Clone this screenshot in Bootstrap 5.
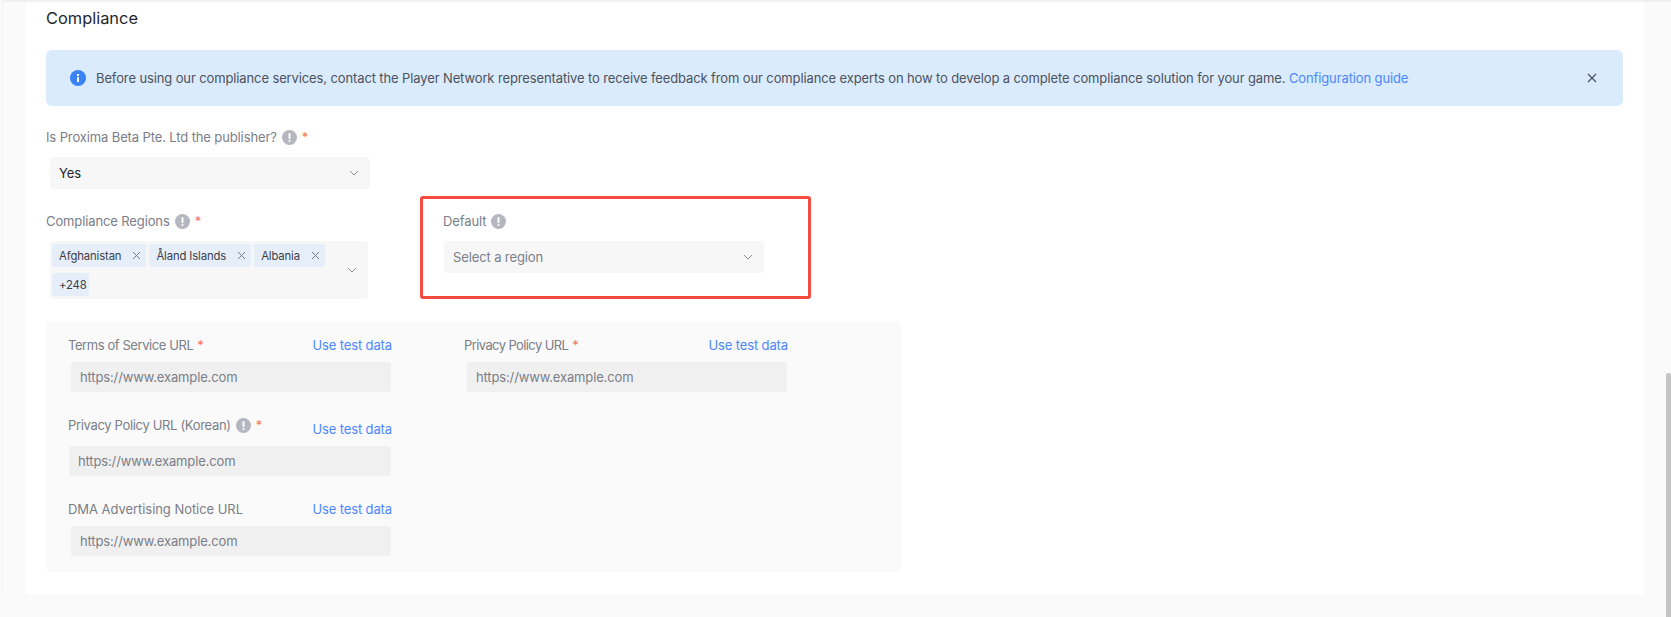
<!DOCTYPE html>
<html lang="en">
<head>
<meta charset="utf-8">
<title>Compliance</title>
<link href="https://cdn.jsdelivr.net/npm/bootstrap@5.3.0/dist/css/bootstrap.min.css" rel="stylesheet">
<style>
html,body{height:617px;overflow:hidden;}
body{background:#fafafa;font-family:Inter,"Noto Sans",sans-serif;font-size:13px;line-height:20px;color:#23262e;letter-spacing:-.12px;}
.shell{margin-left:2px;border-left:1px solid #f2f2f2;border-top:2px solid #f0f0f0;padding-left:22px;padding-right:27px;}
.sheet{background:#fff;height:593px;padding:4px 21px 0 21px;border-radius:0 0 4px 4px;}
.sheet-title{font-size:16.4px;line-height:24px;margin:0 0 20px;font-weight:400;color:#23262e;letter-spacing:0;}
.notice{background:#d9ebfd;border:0;border-radius:6px;height:56px;padding:0 26px 0 24px;margin:0 0 21px;color:#4e525c;font-size:13px;}
.notice-icon{margin-right:10px;flex:none;}
.notice-copy{padding-bottom:1px;}
.notice a,.test-link{color:#4c87ff;text-decoration:none;}
.field-label{color:#7b7e88;height:20px;}
.req{color:#f7765d;margin-left:5px;}
.hint{margin-left:5px;flex:none;}
.picker{background:#f7f7f7;border-radius:4px;color:#23262e;padding-left:9px;padding-right:11px;}
.picker-one{width:320px;height:32px;margin-top:10px;margin-left:4px;}
.picker-many{width:318px;height:58px;margin-top:10px;margin-left:4px;padding:3px 11px 3px 2px;}
.muted-text{color:#7b7e88;}
.tag-wrap{width:285px;column-gap:3px;row-gap:6px;}
.chip{background:#e5eef9;border-radius:2px;height:23px;padding:0 5px 0 7px;font-size:11.3px;color:#3d4048;}
.chip svg{margin-left:11px;}
.chip.count{padding-right:2px;}
.left-col{width:374px;padding-top:15px;flex:none;}
.callout{width:391px;height:103px;border:3px solid #f44b3f;border-radius:3px;padding:12px 0 0 20px;}
.callout .picker-one{margin-left:1px;}
.split{height:103px;margin-top:7px;margin-bottom:22px;}
.panel{width:855px;height:251px;background:#fafafa;border-radius:4px;padding:14px 22px 0;column-gap:72px;}
.field{width:324px;margin-bottom:23px;}
.field-head{height:20px;margin-bottom:7px;}
.field-head.tall{height:24px;}
.field-head.tall .test-link{margin-top:4px;}
.tight-a{letter-spacing:-.42px;}
.tight-b{letter-spacing:-.6px;}
.tight-c{letter-spacing:-.33px;}
.tight-d{letter-spacing:-.05px;}
.url.form-control{width:320px;height:30px;margin-left:3px;background:#f0f0f0;border:0;border-radius:3px;padding:0 9px;font-size:13px;line-height:30px;color:#23262e;letter-spacing:-.14px;}
.url.wide.form-control{width:322px;margin-left:1px;}
.url.form-control::placeholder{color:#7b7e88;opacity:1;}
.thumb{position:absolute;left:1666px;top:373px;width:5px;height:244px;background:#c4c4c4;border-radius:2px 2px 0 0;}
</style>
</head>
<body>
<svg width="0" height="0" class="d-none"><symbol id="hint-glyph" viewBox="0 0 15 15"><circle cx="7.5" cy="7.5" r="7.5" fill="#b5b6bf"/><path d="M7.5 4v4.2" stroke="#fff" stroke-width="2" stroke-linecap="round" fill="none"/><circle cx="7.5" cy="11" r="1.1" fill="#fff"/></symbol></svg>
<div class="shell">
  <div class="sheet">
    <h2 class="sheet-title">Compliance</h2>
    <div class="alert notice d-flex align-items-center" role="alert">
      <svg width="16" height="16" viewBox="0 0 16 16" class="notice-icon"><circle cx="8" cy="8" r="8" fill="#3b82f6"/><rect x="7" y="7" width="2" height="5" fill="#fff"/><rect x="7" y="4" width="2" height="2" fill="#fff"/></svg>
      <span class="flex-grow-1 notice-copy">Before using our compliance services, contact the Player Network representative to receive feedback from our compliance experts on how to develop a complete compliance solution for your game. <a href="#">Configuration guide</a></span>
      <svg width="10" height="10" viewBox="0 0 10 10"><path d="M1 1l8 8M9 1l-8 8" stroke="#4e525c" stroke-width="1.2" fill="none"/></svg>
    </div>
    <div class="field-label d-flex align-items-center">Is Proxima Beta Pte. Ltd the publisher?<svg class="hint" width="15" height="15"><use href="#hint-glyph"/></svg><span class="req">*</span></div>
    <div class="picker picker-one d-flex align-items-center justify-content-between"><span>Yes</span><svg width="10" height="6" viewBox="0 0 10 6"><path d="M1 1l4 4 4-4" stroke="#8b8d95" fill="none"/></svg></div>
    <div class="split d-flex align-items-start">
      <div class="left-col">
        <div class="field-label d-flex align-items-center">Compliance Regions<svg class="hint" width="15" height="15"><use href="#hint-glyph"/></svg><span class="req">*</span></div>
        <div class="picker picker-many d-flex align-items-center justify-content-between">
          <div class="tag-wrap d-flex flex-wrap">
            <span class="chip d-inline-flex align-items-center">Afghanistan<svg width="9" height="9" viewBox="0 0 9 9"><path d="M1 1l7 7M8 1l-7 7" stroke="#777a82" fill="none"/></svg></span>
            <span class="chip d-inline-flex align-items-center">Åland Islands<svg width="9" height="9" viewBox="0 0 9 9"><path d="M1 1l7 7M8 1l-7 7" stroke="#777a82" fill="none"/></svg></span>
            <span class="chip d-inline-flex align-items-center">Albania<svg width="9" height="9" viewBox="0 0 9 9"><path d="M1 1l7 7M8 1l-7 7" stroke="#777a82" fill="none"/></svg></span>
            <span class="chip count d-inline-flex align-items-center">+248</span>
          </div>
          <svg width="10" height="6" viewBox="0 0 10 6"><path d="M1 1l4 4 4-4" stroke="#8b8d95" fill="none"/></svg>
        </div>
      </div>
      <div class="callout">
        <div class="field-label d-flex align-items-center">Default<svg class="hint" width="15" height="15"><use href="#hint-glyph"/></svg></div>
        <div class="picker picker-one d-flex align-items-center justify-content-between"><span class="muted-text">Select a region</span><svg width="10" height="6" viewBox="0 0 10 6"><path d="M1 1l4 4 4-4" stroke="#8b8d95" fill="none"/></svg></div>
      </div>
    </div>
    <div class="panel d-flex">
      <div>
        <div class="field">
          <div class="field-head d-flex justify-content-between"><span class="field-label tight-a">Terms of Service URL<span class="req ms-1">*</span></span><a class="test-link" href="#">Use test data</a></div>
          <input class="form-control url" placeholder="https://www.example.com">
        </div>
        <div class="field">
          <div class="field-head tall d-flex justify-content-between align-items-start"><span class="field-label d-flex align-items-center"><span class="tight-c">Privacy Policy URL (Korean)</span><svg class="hint" width="15" height="15"><use href="#hint-glyph"/></svg><span class="req">*</span></span><a class="test-link" href="#">Use test data</a></div>
          <input class="form-control url wide" placeholder="https://www.example.com">
        </div>
        <div class="field">
          <div class="field-head d-flex justify-content-between"><span class="field-label tight-d">DMA Advertising Notice URL</span><a class="test-link" href="#">Use test data</a></div>
          <input class="form-control url" placeholder="https://www.example.com">
        </div>
      </div>
      <div>
        <div class="field">
          <div class="field-head d-flex justify-content-between"><span class="field-label tight-b">Privacy Policy URL<span class="req ms-1">*</span></span><a class="test-link" href="#">Use test data</a></div>
          <input class="form-control url" placeholder="https://www.example.com">
        </div>
      </div>
    </div>
  </div>
</div>
<div class="thumb"></div>
<script src="https://cdn.jsdelivr.net/npm/bootstrap@5.3.0/dist/js/bootstrap.bundle.min.js"></script>
</body>
</html>
